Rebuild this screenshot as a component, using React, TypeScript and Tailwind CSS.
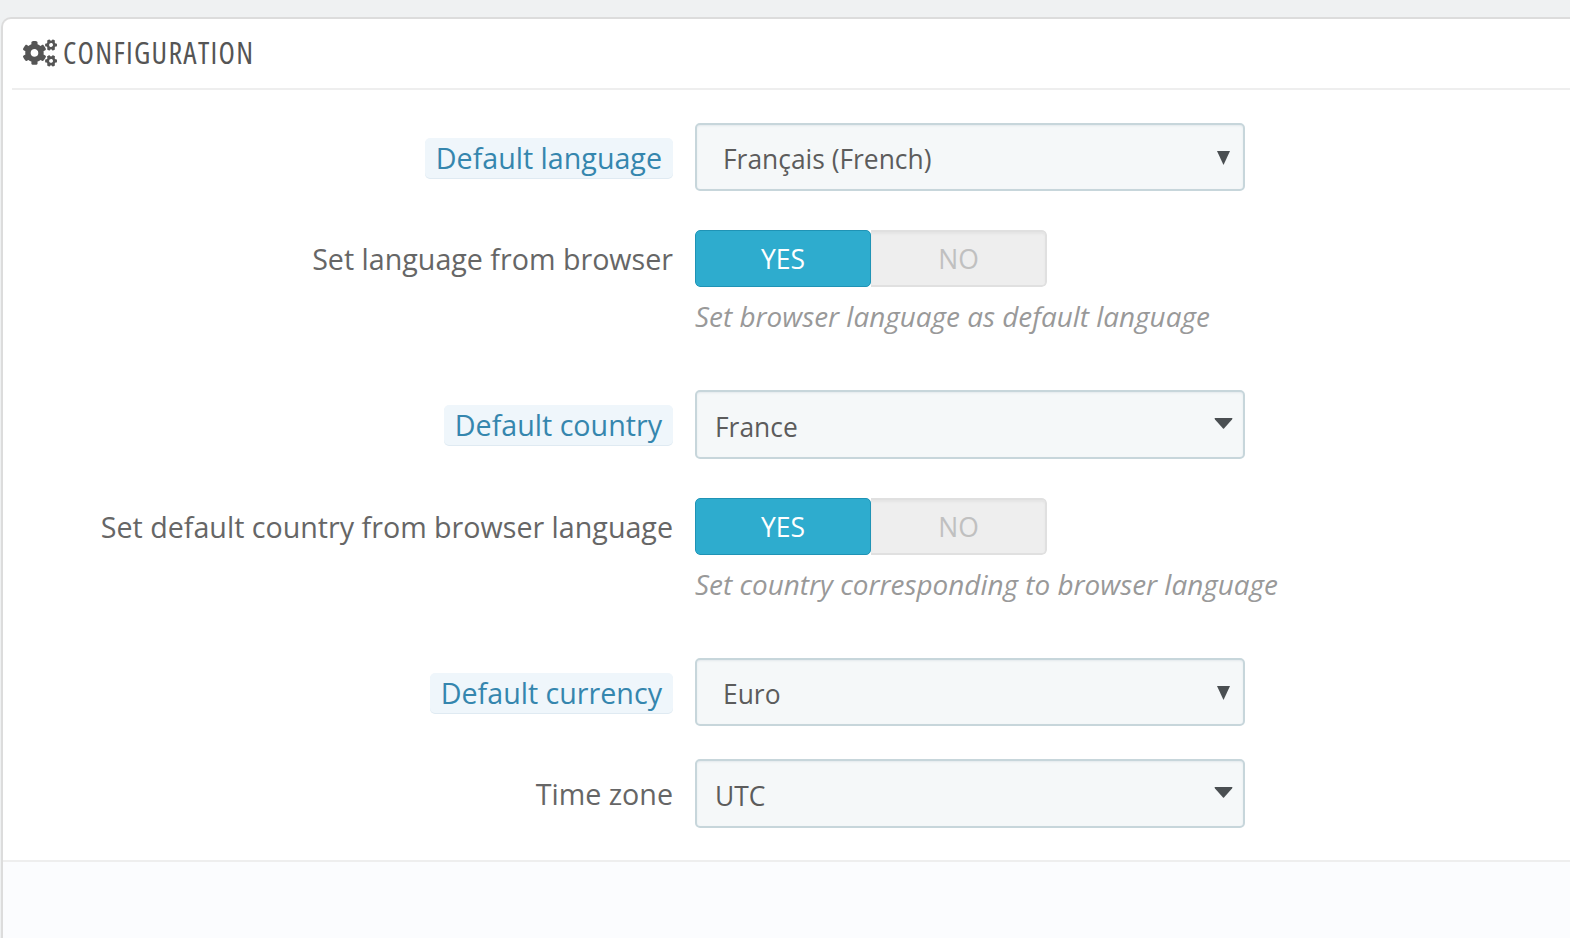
import { FaCogs } from 'react-icons/fa'

function Label({ text, hint = false, nudge = false }: { text: string; hint?: boolean; nudge?: boolean }) {
  return (
    <div className={`flex w-[670px] shrink-0 justify-end ${nudge ? 'mt-[2px]' : ''}`}>
      {hint ? (
        <span className="rounded-[5px] bg-[#eff6fb] px-[11px] text-[28.65px] leading-[40px] text-[#3586ae] shadow-[0_1px_0_#dfeaf2]">
          {text}
        </span>
      ) : (
        <span className="text-[28.65px] leading-[40px] text-[#666666]">{text}</span>
      )}
    </div>
  )
}

function PlainSelect({ value }: { value: string }) {
  return (
    <div className="relative flex h-[68px] w-[550px] items-center rounded-[5px] border-2 border-[#c7d6db] bg-[#f5f8f9] pl-[26px] pt-[3px] text-[26.4px] text-[#5c5c5c] shadow-[inset_0_1px_2px_#e3e9ec]">
      <span className="leading-[38px]">{value}</span>
      <svg className="absolute right-[13px] top-[26px]" width="13" height="14" viewBox="0 0 13 14">
        <path d="M0 0H13L6.5 14Z" fill="#4a4f52" />
      </svg>
    </div>
  )
}

function ChosenSelect({ value }: { value: string }) {
  return (
    <div className="relative flex h-[69px] w-[550px] items-center rounded-[5px] border-2 border-[#c7d6db] bg-[#f5f8f9] pl-[18px] pt-[5px] text-[26.4px] text-[#5c5c5c] shadow-[inset_0_1px_2px_#e3e9ec]">
      <span className="leading-[38px]">{value}</span>
      <svg className="absolute right-[10px] top-[26px]" width="19" height="11" viewBox="0 0 19 11">
        <path d="M1 0H18Q19 0 18 1.5L10 10.5Q9.5 11 9 10.5L1 1.5Q0 0 1 0Z" fill="#4a4f52" />
      </svg>
    </div>
  )
}

function Toggle() {
  return (
    <div className="flex h-[57px] w-[352px] overflow-hidden rounded-[5px] text-[26.5px]">
      <div className="flex w-[176px] items-center justify-center rounded-[5px] border border-[#1f93b5] bg-[#2eacce] pt-[3px] text-white">
        YES
      </div>
      <div className="flex flex-1 items-center justify-center rounded-r-[5px] border-2 border-l-0 border-[#e0e0e0] bg-[#eeeeee] pl-px pt-[3px] text-[#c0c0c0] shadow-[inset_0_2px_2px_#e4e4e4]">
        NO
      </div>
    </div>
  )
}

function Row({ children, className }: { children: React.ReactNode; className: string }) {
  return <div className={`flex items-center gap-[22px] ${className}`}>{children}</div>
}

function Help({ text }: { text: string }) {
  return <p className="mt-[8px] text-[27.9px] italic leading-[42px] text-[#999999]">{text}</p>
}

export default function App() {
  return (
    <div className="h-[938px] overflow-hidden bg-[#eff1f2] pl-px pt-[17px] font-['Open_Sans',sans-serif]">
      <div className="flex h-[921px] flex-col rounded-tl-[10px] border-l-2 border-t-2 border-[#dcdcdc] bg-white">
        <div className="ml-[9px] flex h-[71px] items-center gap-[6px] border-b-2 border-[#eeeeee] pb-[1px] pl-[11px] text-[#555555]">
          <FaCogs className="h-[34px] w-[34px]" />
          <span className="font-stretch-condensed text-[30px] leading-none tracking-[1.3px]">CONFIGURATION</span>
        </div>

        <div className="h-[770px] pt-[33px]">
          <Row className="">
            <Label text="Default language" hint nudge />
            <PlainSelect value="Français (French)" />
          </Row>
          <Row className="mt-[39px]">
            <Label text="Set language from browser" />
            <Toggle />
          </Row>
          <div className="ml-[692px]">
            <Help text="Set browser language as default language" />
          </div>

          <Row className="mt-[53px]">
            <Label text="Default country" hint />
            <ChosenSelect value="France" />
          </Row>
          <Row className="mt-[39px]">
            <Label text="Set default country from browser language" />
            <Toggle />
          </Row>
          <div className="ml-[692px]">
            <Help text="Set country corresponding to browser language" />
          </div>

          <Row className="mt-[53px]">
            <Label text="Default currency" hint nudge />
            <PlainSelect value="Euro" />
          </Row>
          <Row className="mt-[33px]">
            <Label text="Time zone" />
            <ChosenSelect value="UTC" />
          </Row>
        </div>

        <div className="flex-1 border-t-2 border-[#eeeeee] bg-[#fbfcfe]" />
      </div>
    </div>
  )
}
